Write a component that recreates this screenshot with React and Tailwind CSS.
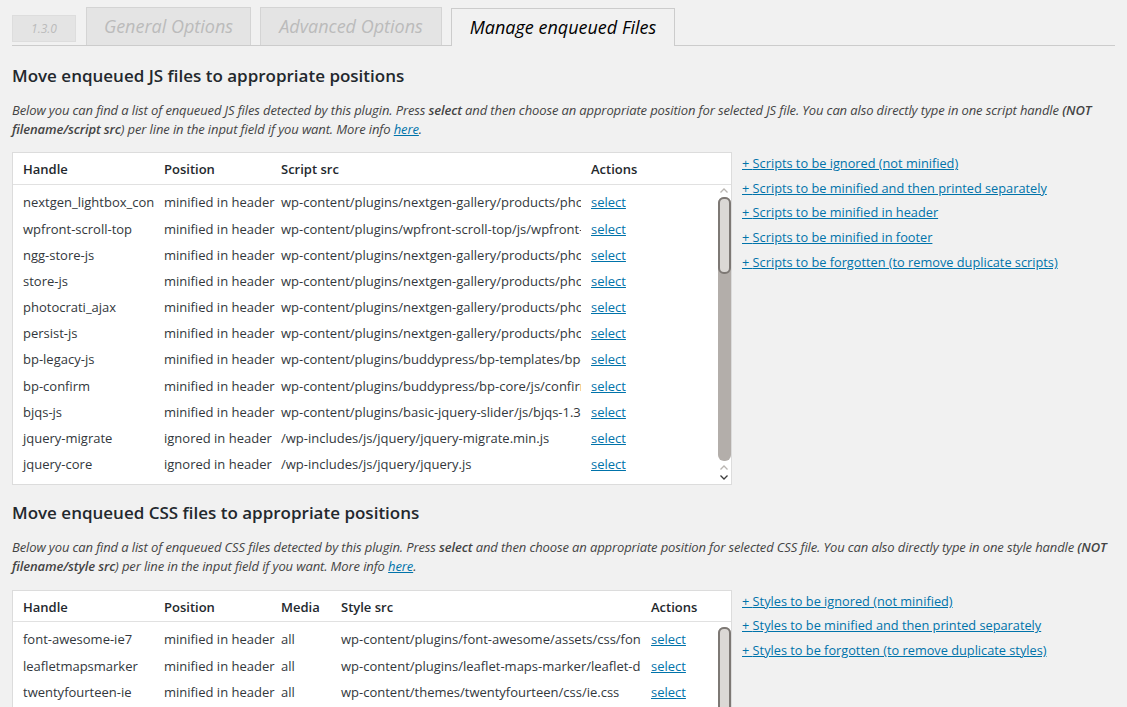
import React from 'react';

const font = { fontFamily: '"Open Sans", "Noto Sans", sans-serif' };

const jsRows = [
  ['nextgen_lightbox_context', 'minified in header', 'wp-content/plugins/nextgen-gallery/products/photocrati_nextgen/modules/lightbox/static/lightbox_context.js'],
  ['wpfront-scroll-top', 'minified in header', 'wp-content/plugins/wpfront-scroll-top/js/wpfront-scroll-top.js'],
  ['ngg-store-js', 'minified in header', 'wp-content/plugins/nextgen-gallery/products/photocrati_nextgen/modules/ngg-store.js'],
  ['store-js', 'minified in header', 'wp-content/plugins/nextgen-gallery/products/photocrati_nextgen/modules/store.js'],
  ['photocrati_ajax', 'minified in header', 'wp-content/plugins/nextgen-gallery/products/photocrati_nextgen/modules/ajax.js'],
  ['persist-js', 'minified in header', 'wp-content/plugins/nextgen-gallery/products/photocrati_nextgen/modules/persist.js'],
  ['bp-legacy-js', 'minified in header', 'wp-content/plugins/buddypress/bp-templates/bp-legacy/js/buddypress.js'],
  ['bp-confirm', 'minified in header', 'wp-content/plugins/buddypress/bp-core/js/confirm.min.js'],
  ['bjqs-js', 'minified in header', 'wp-content/plugins/basic-jquery-slider/js/bjqs-1.3.min.js'],
  ['jquery-migrate', 'ignored in header', '/wp-includes/js/jquery/jquery-migrate.min.js'],
  ['jquery-core', 'ignored in header', '/wp-includes/js/jquery/jquery.js'],
];

const cssRows = [
  ['font-awesome-ie7', 'minified in header', 'all', 'wp-content/plugins/font-awesome/assets/css/font-awesome-ie7.min.css'],
  ['leafletmapsmarker', 'minified in header', 'all', 'wp-content/plugins/leaflet-maps-marker/leaflet-dist/leaflet.css'],
  ['twentyfourteen-ie', 'minified in header', 'all', 'wp-content/themes/twentyfourteen/css/ie.css'],
  ['twentyfourteen-style', 'minified in header', 'all', 'wp-content/themes/twentyfourteen/style.css'],
];

function Chevron({ up }) {
  return (
    <svg width="10" height="7" viewBox="0 0 10 7" className="mx-auto">
      <path
        d={up ? 'M1.5 5.5 L5 2 L8.5 5.5' : 'M1.5 1.5 L5 5 L8.5 1.5'}
        fill="none"
        stroke={up ? '#b9b5b1' : '#3c3c3c'}
        strokeWidth="1.3"
      />
    </svg>
  );
}

function ScrollBar({ thumbH, trackH }) {
  return (
    <div className="flex w-[14px] shrink-0 flex-col items-center pt-[2px]">
      <Chevron up />
      <div className="mt-[3px] flex w-[13px] flex-col rounded-[6px] bg-[#b3aeaa]" style={{ height: trackH }}>
        <div className="rounded-[6px] border-2 border-[#7d7874] bg-[#dbd8d5]" style={{ height: thumbH }} />
      </div>
      <div className="mt-[3px]">
        <Chevron up />
      </div>
      <div className="mt-[3px]">
        <Chevron />
      </div>
    </div>
  );
}

function Cell({ w, children, clip = true }) {
  return (
    <div className={`shrink-0 whitespace-nowrap pl-[10px] ${clip ? 'overflow-hidden' : ''}`} style={{ width: w }}>
      {children}
    </div>
  );
}

function SelectLink() {
  return <a href="#" className="text-[#0073aa] underline">select</a>;
}

function JsTable() {
  const widths = [141, 117, 310];
  return (
    <div className="w-[720px] shrink-0 border border-[#dcdcdc] bg-white text-[13px] text-[#32373c]">
      <div className="flex h-[32px] items-center border-b border-[#e1e1e1] pt-[3px] font-semibold text-[#23282d]">
        <Cell w={widths[0]}>Handle</Cell>
        <Cell w={widths[1]}>Position</Cell>
        <Cell w={widths[2]}>Script src</Cell>
        <Cell w={120}>Actions</Cell>
      </div>
      <div className="flex h-[299px] overflow-hidden">
        <div className="flex-1 overflow-hidden pt-[5px]">
          {jsRows.map((r) => (
            <div key={r[0]} className="flex h-[26.2px] items-center">
              <Cell w={widths[0]}>{r[0]}</Cell>
              <Cell w={widths[1]} clip={false}>{r[1]}</Cell>
              <Cell w={widths[2]}>{r[2]}</Cell>
              <Cell w={100}><SelectLink /></Cell>
            </div>
          ))}
        </div>
        <ScrollBar trackH={264} thumbH={77} />
      </div>
    </div>
  );
}

function CssTable() {
  const widths = [141, 117, 60, 310];
  return (
    <div className="w-[720px] shrink-0 border border-b-0 border-[#dcdcdc] bg-white text-[13px] text-[#32373c]">
      <div className="flex h-[31px] items-center border-b border-[#e1e1e1] pt-[3px] font-semibold text-[#23282d]">
        <Cell w={widths[0]}>Handle</Cell>
        <Cell w={widths[1]}>Position</Cell>
        <Cell w={widths[2]}>Media</Cell>
        <Cell w={widths[3]}>Style src</Cell>
        <Cell w={80}>Actions</Cell>
      </div>
      <div className="flex h-[120px] overflow-hidden">
        <div className="flex-1 overflow-hidden pt-[5px]">
          {cssRows.map((r) => (
            <div key={r[0]} className="flex h-[26.3px] items-center">
              <Cell w={widths[0]}>{r[0]}</Cell>
              <Cell w={widths[1]} clip={false}>{r[1]}</Cell>
              <Cell w={widths[2]}>{r[2]}</Cell>
              <Cell w={widths[3]}>{r[3]}</Cell>
              <Cell w={80}><SelectLink /></Cell>
            </div>
          ))}
        </div>
        <ScrollBar trackH={200} thumbH={120} />
      </div>
    </div>
  );
}

function SideLinks({ items, leading = 'leading-[24.7px]' }) {
  return (
    <div className={`-mt-[1px] flex flex-col pl-[10px] text-[12.75px] ${leading}`}>
      {items.map((t) => (
        <a key={t} href="#" className="self-start text-[#0073aa] underline">
          + {t}
        </a>
      ))}
    </div>
  );
}

function Description({ kind, handle, src }) {
  return (
    <p className="mt-[14px] text-[13px] italic leading-[19px] tracking-[-0.12px] text-[#444]">
      Below you can find a list of enqueued {kind} files detected by this plugin. Press <b className="font-semibold">select</b> and then choose an
      appropriate position for selected {kind} file. You can also directly type in one {handle} handle{' '}
      <b className="font-semibold">(NOT filename/{src} src</b>) per line in the input field if you want. More info{' '}
      <a href="#" className="text-[#0073aa] underline">here</a>.
    </p>
  );
}

export default function App() {
  return (
    <div className="h-[707px] w-[1127px] overflow-hidden bg-[#f1f1f1] px-[12px]" style={font}>
      {/* tabs */}
      <div className="flex h-[46px] items-end border-b border-[#cccccc]">
        <div className="mb-[3px] flex h-[27px] w-[64px] items-center justify-center border border-[#dddddd] bg-[#e4e4e4] text-[12px] italic text-[#bbbbbb]">
          1.3.0
        </div>
        <div className="ml-[10px] flex h-[38px] w-[165px] items-center justify-center border border-b-0 border-[#d4d4d4] bg-[#e4e4e4] text-[18px] italic text-[#bbbbbb]">
          General Options
        </div>
        <div className="ml-[9px] flex h-[38px] w-[182px] items-center justify-center border border-b-0 border-[#d4d4d4] bg-[#e4e4e4] text-[18px] italic text-[#bbbbbb]">
          Advanced Options
        </div>
        <div className="relative top-px ml-[9px] flex h-[38px] w-[224px] items-center justify-center border border-b-0 border-[#cccccc] bg-[#f1f1f1] text-[18px] italic text-black">
          Manage enqueued Files
        </div>
      </div>

      {/* JS */}
      <h3 className="mt-[18px] text-[17px] font-semibold leading-[23px] text-[#23282d]">
        Move enqueued JS files to appropriate positions
      </h3>
      <Description kind="JS" handle="script" src="script" />
      <div className="mt-[13px] flex items-start">
        <JsTable />
        <SideLinks
          items={[
            'Scripts to be ignored (not minified)',
            'Scripts to be minified and then printed separately',
            'Scripts to be minified in header',
            'Scripts to be minified in footer',
            'Scripts to be forgotten (to remove duplicate scripts)',
          ]}
        />
      </div>

      {/* CSS */}
      <h3 className="mt-[16px] text-[17px] font-semibold leading-[23px] text-[#23282d]">
        Move enqueued CSS files to appropriate positions
      </h3>
      <Description kind="CSS" handle="style" src="style" />
      <div className="mt-[14px] flex items-start">
        <CssTable />
        <SideLinks
          leading="leading-[24.4px]"
          items={[
            'Styles to be ignored (not minified)',
            'Styles to be minified and then printed separately',
            'Styles to be forgotten (to remove duplicate styles)',
          ]}
        />
      </div>
    </div>
  );
}
